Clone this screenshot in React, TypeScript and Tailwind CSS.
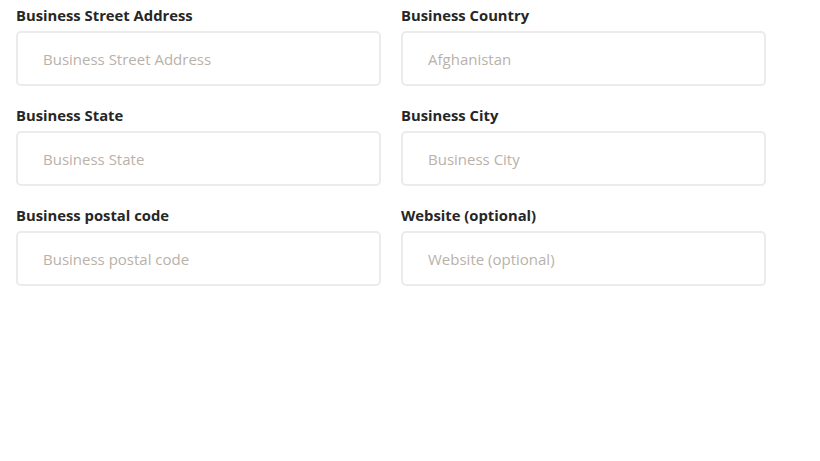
const fields = [
  { label: "Business Street Address", placeholder: "Business Street Address" },
  { label: "Business Country", placeholder: "Afghanistan" },
  { label: "Business State", placeholder: "Business State" },
  { label: "Business City", placeholder: "Business City" },
  { label: "Business postal code", placeholder: "Business postal code" },
  { label: "Website (optional)", placeholder: "Website (optional)" },
];

export default function App() {
  return (
    <div className="min-h-[461px] bg-white pl-4 pt-[7px] font-['Open_Sans',sans-serif]">
      <div className="grid grid-cols-[365px_365px] gap-x-5 gap-y-[21px]">
        {fields.map((field) => (
          <label key={field.label} className="block">
            <span className="mb-[7px] block text-[14.8px] font-bold leading-[17px] text-[#262626]">
              {field.label}
            </span>
            <input
              type="text"
              placeholder={field.placeholder}
              className="block h-[55px] w-full rounded-[5px] border-2 border-[#ebebeb] bg-white pl-[25px] text-[15px] text-[#333] outline-none placeholder:text-[#bab1a9]"
            />
          </label>
        ))}
      </div>
    </div>
  );
}
